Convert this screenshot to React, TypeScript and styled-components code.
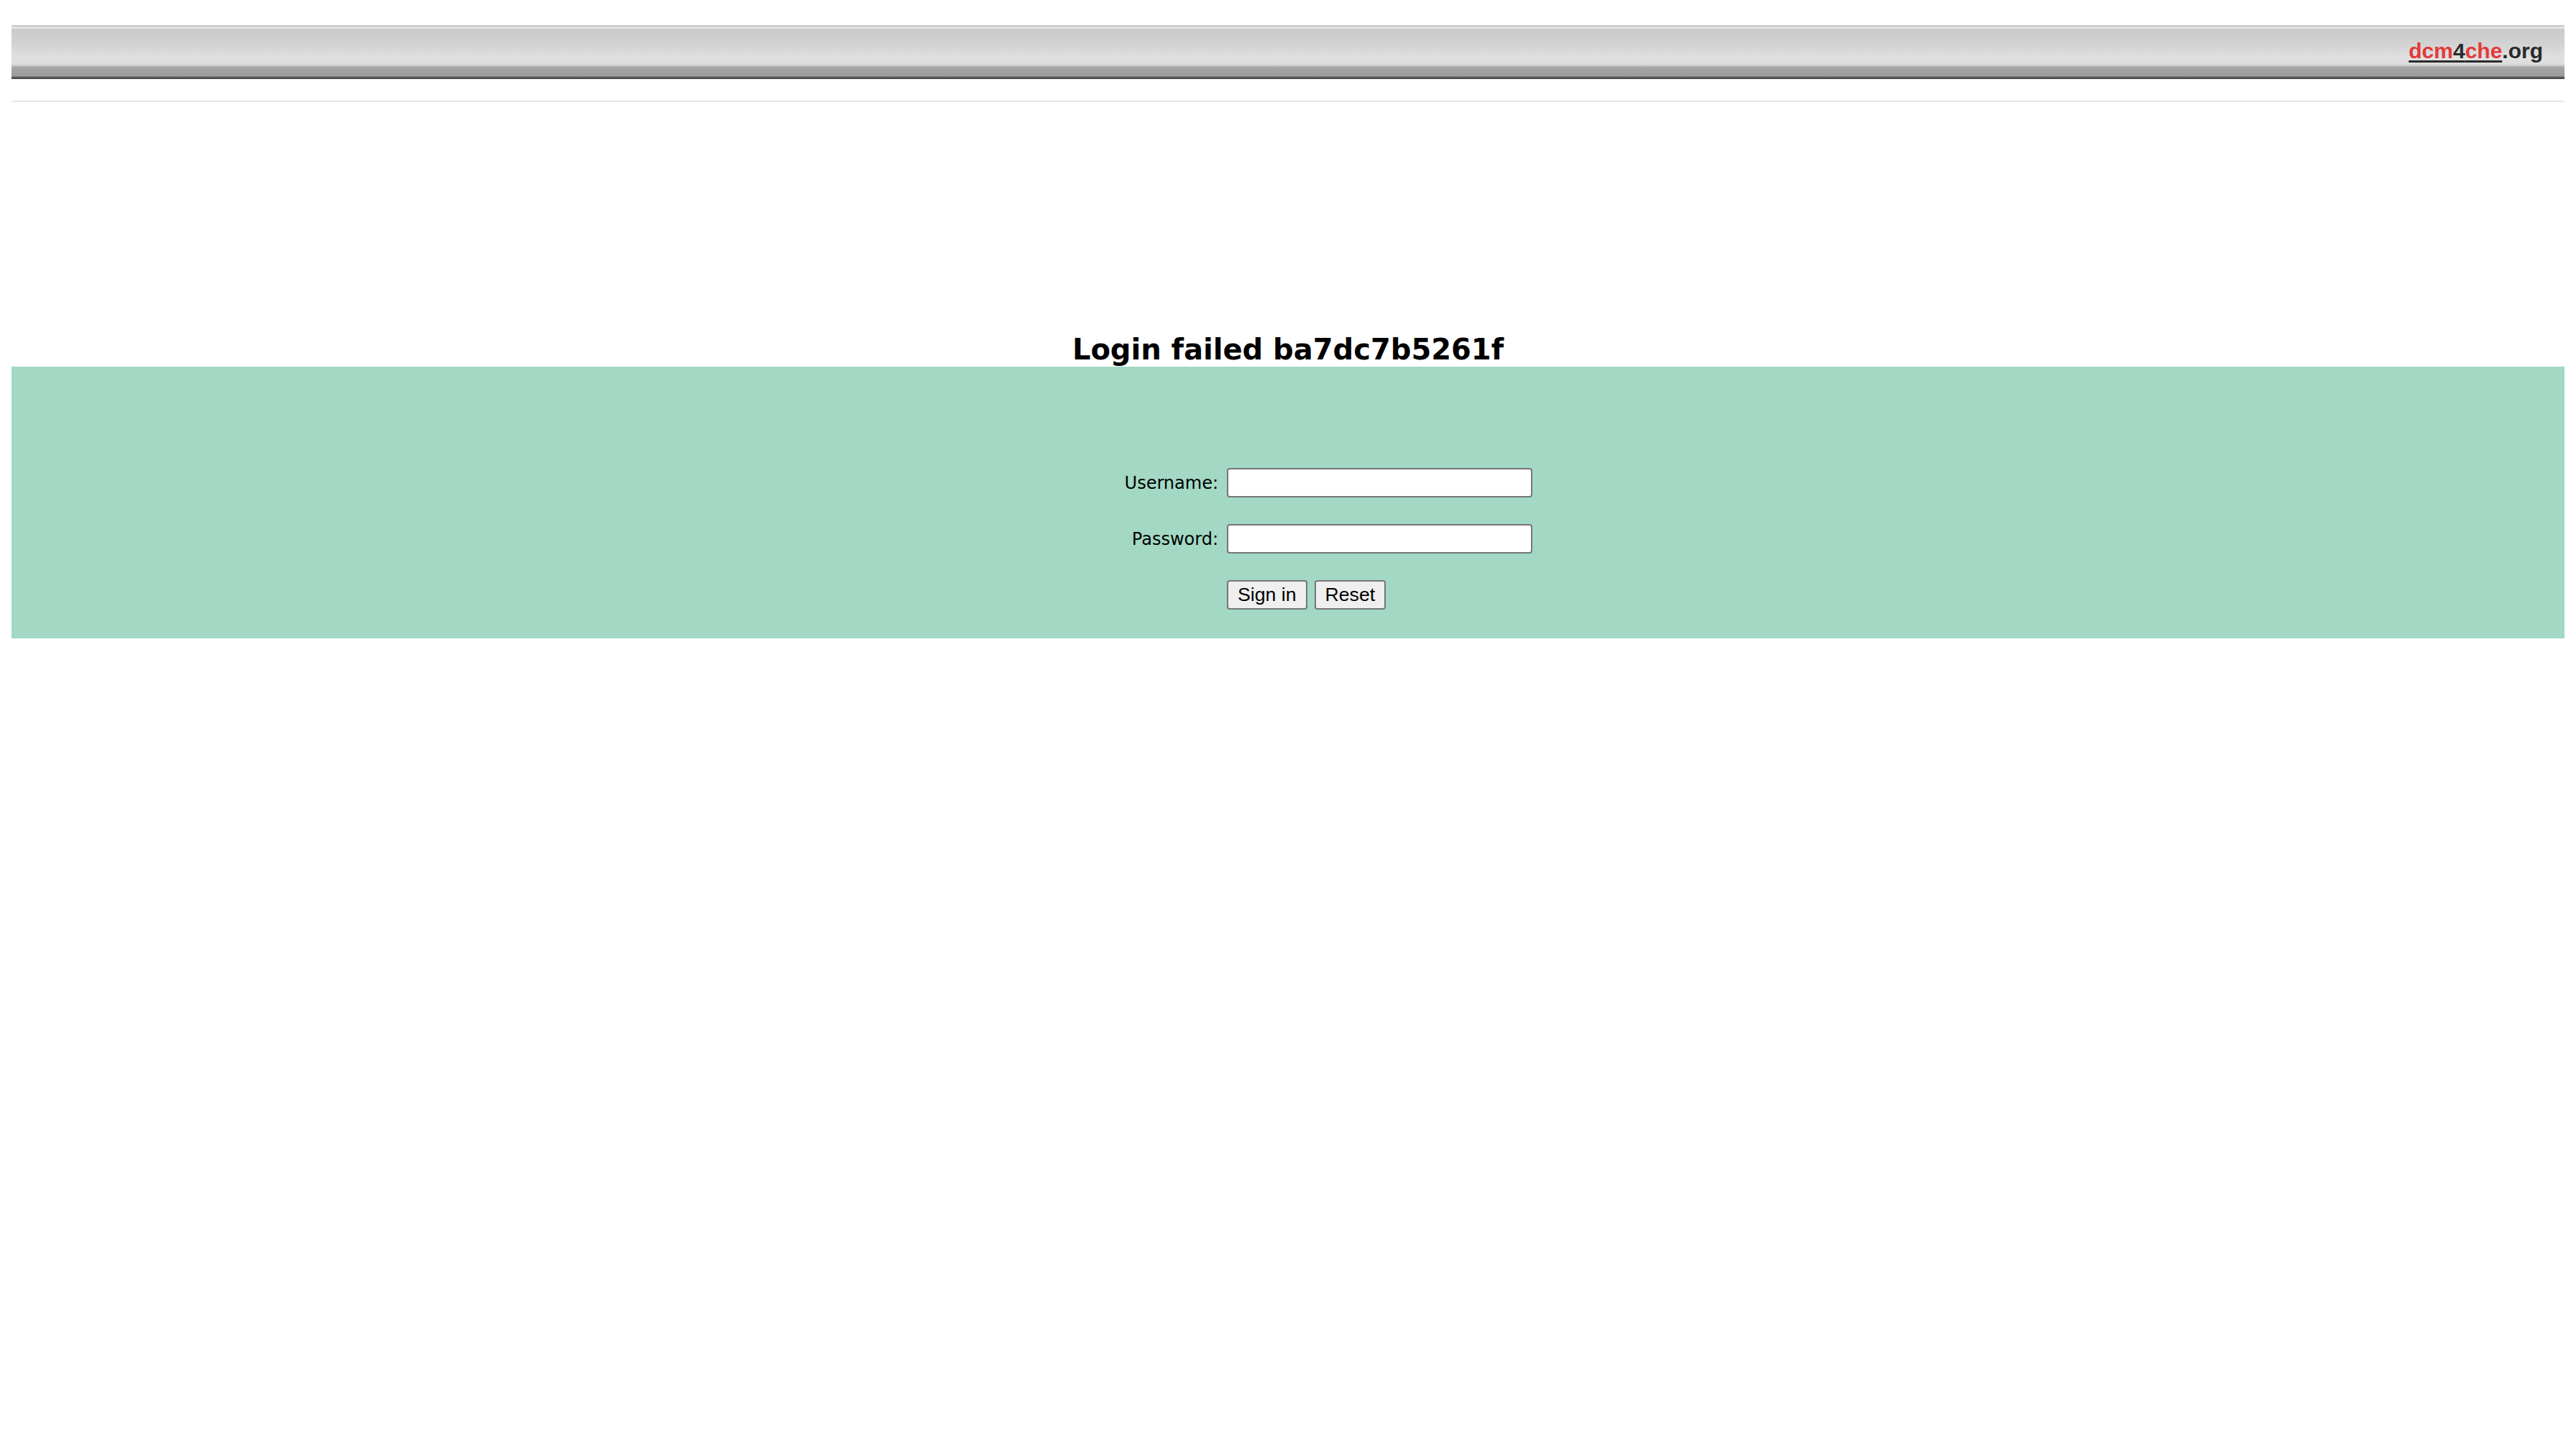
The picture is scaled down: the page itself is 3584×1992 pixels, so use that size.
import React from 'react';
import styled, {createGlobalStyle} from 'styled-components';

const GlobalStyle = createGlobalStyle`
	html, body {
		margin: 0;
		padding: 0;
		background: #ffffff;
	}
	body {
		padding: 16px;
		font-family: 'DejaVu Sans', Verdana, sans-serif;
		color: #000;
	}
`;

const Header = styled.div`
	margin-top: 19px;
	height: 75px;
	display: flex;
	align-items: center;
	justify-content: flex-end;
	padding-right: 30px;
	box-sizing: border-box;
	background: linear-gradient(
		to bottom,
		#c4c4c4 0px,
		#c4c4c4 2px,
		#e4e4e4 2px,
		#e4e4e4 4px,
		#cacaca 6px,
		#d2d2d2 26px,
		#e0e0e0 46px,
		#dcdcdc 54px,
		#c4c4c4 57px,
		#a8a8a8 58px,
		#a0a0a0 64px,
		#9c9c9c 71px,
		#5a5a5a 72px,
		#4a4a4a 75px
	);
`;

const Logo = styled.a`
	font-family: 'Liberation Sans', Arial, sans-serif;
	font-weight: bold;
	font-size: 30px;
	color: #2a2a2a;
	text-decoration: none;
	margin-top: -4px;
`;

const LogoLink = styled.span`
	text-decoration: underline;
	text-decoration-thickness: 3px;
	text-underline-offset: 3px;
	text-decoration-color: #2a2a2a;
`;

const Red = styled.span`
	color: #e23a3a;
`;

const Rule = styled.div`
	margin-top: 30px;
	height: 2px;
	background: #e6e6e6;
`;

const Title = styled.h2`
	margin: 320px 0 0;
	font-family: 'DejaVu Sans', Verdana, sans-serif;
	font-weight: bold;
	font-size: 40px;
	line-height: 48px;
	text-align: center;
`;

const Panel = styled.div`
	background: #a2d8c4;
	padding: 141px 0 40px;
	display: flex;
	justify-content: center;
`;

const FormGrid = styled.form`
	display: grid;
	grid-template-columns: 243px 425px;
	column-gap: 12px;
	row-gap: 37px;
	align-items: center;
`;

const Label = styled.label`
	font-family: 'DejaVu Sans', Verdana, sans-serif;
	font-size: 24px;
	text-align: right;
`;

const Input = styled.input`
	box-sizing: border-box;
	width: 425px;
	height: 41px;
	border: 2px solid #767676;
	border-radius: 4px;
	background: #fff;
	padding: 2px 4px;
	font-size: 26px;
	outline: none;
`;

const Buttons = styled.div`
	grid-column: 2;
	display: flex;
	gap: 10px;
`;

const Button = styled.button`
	box-sizing: border-box;
	height: 41px;
	padding: 0 13px;
	border: 2px solid #767676;
	border-radius: 4px;
	background: #efefef;
	color: #000;
	font-family: 'Liberation Sans', Arial, sans-serif;
	font-size: 26.67px;
`;

const App = () => (
	<>
		<GlobalStyle />
		<Header>
			<Logo href="#">
				<LogoLink>
					<Red>dcm</Red>4<Red>che</Red>
				</LogoLink>
				.org
			</Logo>
		</Header>
		<Rule />
		<Title>Login failed ba7dc7b5261f</Title>
		<Panel>
			<FormGrid onSubmit={e => e.preventDefault()}>
				<Label htmlFor="username">Username:</Label>
				<Input id="username" type="text" />
				<Label htmlFor="password">Password:</Label>
				<Input id="password" type="password" />
				<Buttons>
					<Button type="submit">Sign in</Button>
					<Button type="reset">Reset</Button>
				</Buttons>
			</FormGrid>
		</Panel>
	</>
);

export default App;
